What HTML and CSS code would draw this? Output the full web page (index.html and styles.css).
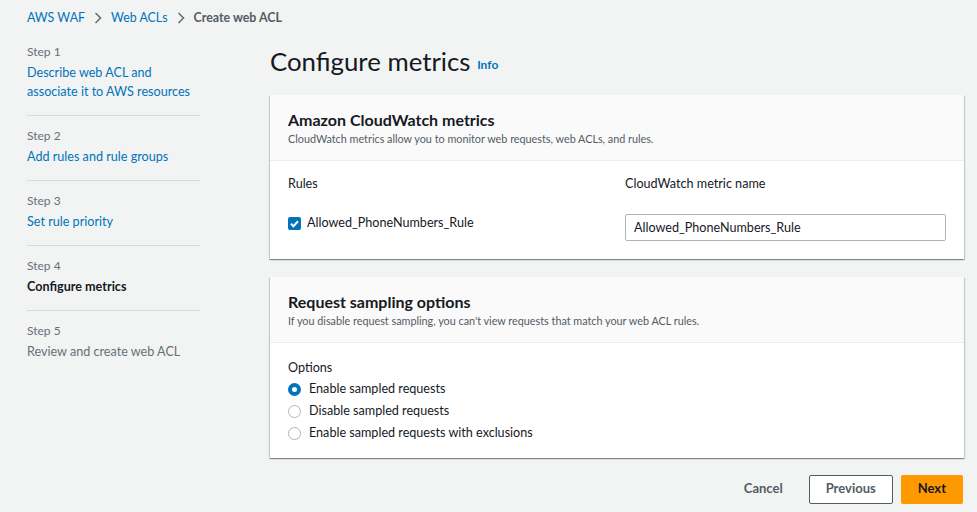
FILE: index.html
```html
<!DOCTYPE html>
<html>
<head>
    <title>Create web ACL</title>
    <link rel="stylesheet" href="styles.css">
</head>
<body>
    <!-- breadcrumb -->
    <div class="crumbs">
        <a href="#">AWS WAF</a>
        <svg class="chev" width="8" height="12" viewBox="0 0 8 12"><path d="M1.5 1l5 5-5 5" fill="none" stroke="#687078" stroke-width="1.6"/></svg>
        <a href="#">Web ACLs</a>
        <svg class="chev" width="8" height="12" viewBox="0 0 8 12"><path d="M1.5 1l5 5-5 5" fill="none" stroke="#687078" stroke-width="1.6"/></svg>
        <span class="current">Create web ACL</span>
    </div>

    <div class="layout">
        <!-- wizard steps -->
        <nav class="steps">
            <div class="step">
                <div class="step-label">Step 1</div>
                <a class="step-link" href="#">Describe web ACL and<br>associate it to AWS resources</a>
            </div>
            <div class="step">
                <div class="step-label">Step 2</div>
                <a class="step-link" href="#">Add rules and rule groups</a>
            </div>
            <div class="step">
                <div class="step-label">Step 3</div>
                <a class="step-link" href="#">Set rule priority</a>
            </div>
            <div class="step">
                <div class="step-label">Step 4</div>
                <span class="step-link active">Configure metrics</span>
            </div>
            <div class="step last">
                <div class="step-label">Step 5</div>
                <span class="step-link disabled">Review and create web ACL</span>
            </div>
        </nav>

        <!-- main content -->
        <main class="content">
            <h1>Configure metrics <a class="info" href="#">Info</a></h1>

            <section class="card">
                <div class="card-head">
                    <h2>Amazon CloudWatch metrics</h2>
                    <p>CloudWatch metrics allow you to monitor web requests, web ACLs, and rules.</p>
                </div>
                <div class="card-body metrics">
                    <div>
                        <div class="field-label">Rules</div>
                        <label class="check">
                            <span class="box">
                                <svg width="13" height="13" viewBox="0 0 13 13"><path d="M3 6.8l2.4 2.4L10 4.2" fill="none" stroke="#fff" stroke-width="2"/></svg>
                            </span>
                            Allowed_PhoneNumbers_Rule
                        </label>
                    </div>
                    <div>
                        <div class="field-label">CloudWatch metric name</div>
                        <div class="input">Allowed_PhoneNumbers_Rule</div>
                    </div>
                </div>
            </section>

            <section class="card">
                <div class="card-head">
                    <h2>Request sampling options</h2>
                    <p>If you disable request sampling, you can't view requests that match your web ACL rules.</p>
                </div>
                <div class="card-body sampling">
                    <div class="field-label">Options</div>
                    <label class="radio"><span class="dot on"></span>Enable sampled requests</label>
                    <label class="radio"><span class="dot"></span>Disable sampled requests</label>
                    <label class="radio"><span class="dot"></span>Enable sampled requests with exclusions</label>
                </div>
            </section>

            <div class="actions">
                <a class="btn link" href="#">Cancel</a>
                <a class="btn normal" href="#">Previous</a>
                <a class="btn primary" href="#">Next</a>
            </div>
        </main>
    </div>
</body>
</html>
```

FILE: styles.css
```css
/* Page basics */
body {
    margin: 0;
    background: #f2f3f3;
    font-family: Lato, "Open Sans", sans-serif;
    color: #16191f;
}
a {
    text-decoration: none;
    color: #0073bb;
}

/* Breadcrumb */
.crumbs {
    display: flex;
    align-items: center;
    padding: 8px 0 0 27px;
    font-size: 12.4px;
    line-height: 20px;
}
.crumbs .chev {
    margin: 0 9px 0 9px;
}
.crumbs .current {
    color: #545b64;
    font-weight: 700;
}

/* Two columns: steps and main content */
.layout {
    display: grid;
    grid-template-columns: 173px 1fr;
    column-gap: 70px;
    padding: 15px 13px 0 27px;
}

/* Wizard steps */
.step {
    padding: 11px 0 14px;
    border-bottom: 1px solid #d5dbdb;
}
.step:first-child {
    padding-top: 0;
}
.step.last {
    border-bottom: none;
}
.step-label {
    font-size: 12px;
    line-height: 18px;
    color: #687078;
}
.step-link {
    display: block;
    margin-top: 2px;
    font-size: 12.6px;
    line-height: 19px;
}
.step-link.active {
    font-weight: 700;
    color: #16191f;
}
.step-link.disabled {
    color: #687078;
}

/* Main header */
h1 {
    margin: 0 0 16px;
    font-size: 25.8px;
    line-height: 36px;
    font-weight: 400;
}
.info {
    font-size: 12px;
    line-height: 1;
    font-weight: 700;
    vertical-align: 2px;
}

/* Cards */
.card {
    background: #fff;
    box-shadow: 0 1px 1px 0 rgba(0, 28, 36, 0.3), 1px 1px 1px 0 rgba(0, 28, 36, 0.15), -1px 1px 1px 0 rgba(0, 28, 36, 0.15);
    margin-bottom: 18px;
}
.card-head {
    background: #fafafa;
    border-bottom: 1px solid #eaeded;
    padding: 14px 18px 13px;
}
.card-head h2 {
    margin: 0;
    font-size: 16px;
    line-height: 22px;
    font-weight: 700;
}
.card-head p {
    margin: 0;
    font-size: 10.8px;
    line-height: 16px;
    color: #545b64;
}
.card-body {
    padding: 13px 18px 18px;
    font-size: 12.6px;
}
.field-label {
    line-height: 20px;
}

/* CloudWatch metrics fields */
.metrics {
    display: grid;
    grid-template-columns: 1fr 1fr;
    column-gap: 16px;
}
.check {
    display: flex;
    align-items: center;
    margin-top: 20px;
    line-height: 18px;
}
.box {
    width: 13px;
    height: 13px;
    border-radius: 2px;
    background: #0073bb;
    margin-right: 6px;
    display: flex;
}
.input {
    margin-top: 20px;
    height: 25px;
    line-height: 25px;
    padding: 0 8px;
    border: 1px solid #aab7b8;
    border-radius: 2px;
}

/* Sampling radios */
.sampling {
    padding: 15px 18px 14px;
}
.radio {
    display: flex;
    align-items: center;
    line-height: 22px;
}
.dot {
    width: 13px;
    height: 13px;
    border: 1px solid #aab7b8;
    border-radius: 50%;
    margin-right: 8px;
    box-sizing: border-box;
}
.dot.on {
    border: 4px solid #0073bb;
}

/* Footer buttons */
.actions {
    display: flex;
    justify-content: flex-end;
    gap: 8px;
    margin-top: -1px;
    padding-right: 1px;
}
.btn {
    height: 27px;
    line-height: 25px;
    padding: 0 16px;
    border: 1px solid transparent;
    border-radius: 2px;
    font-size: 13px;
    font-weight: 700;
    color: #545b64;
}
.btn.link {
    padding: 0 17px;
}
.btn.normal {
    background: #fff;
    border-color: #545b64;
}
.btn.primary {
    background: #ff9900;
    color: #16191f;
}
```
